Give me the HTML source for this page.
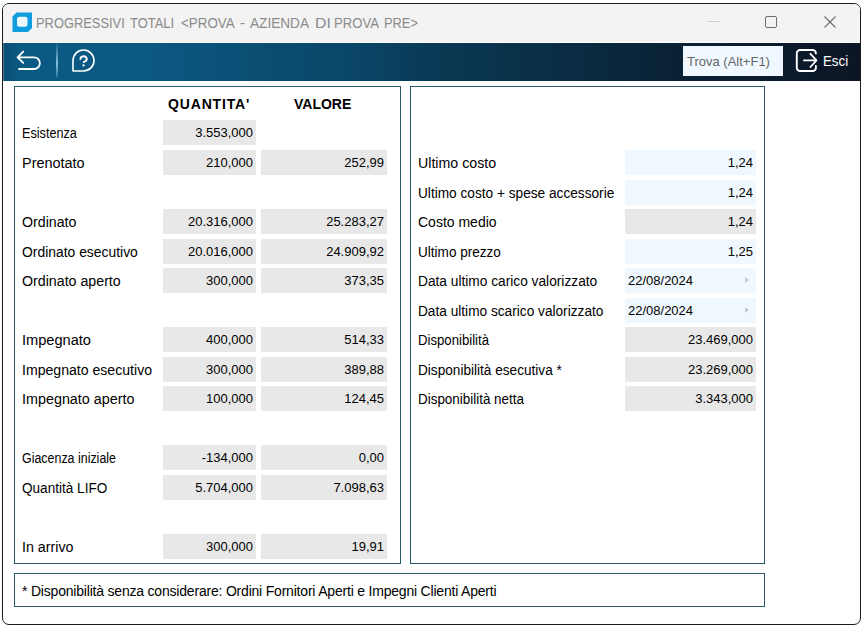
<!DOCTYPE html>
<html><head><meta charset="utf-8">
<style>
html,body{margin:0;padding:0;background:#fff;width:862px;height:627px;overflow:hidden;position:relative;font-family:"Liberation Sans",sans-serif;}
.win{position:absolute;left:2px;top:3px;width:857px;height:620px;border:1px solid #1c1c1c;border-radius:7px;background:#fff;overflow:hidden;}
.title{position:absolute;left:0;top:0;width:100%;height:38px;background:#f3f3f3;border-bottom:1px solid #fff;}
.toolbar{position:absolute;left:0;top:39px;width:100%;height:38px;background:linear-gradient(90deg,#0a4f75 0px,#0b5a83 17px,#0b5882 147px,#0b4f74 247px,#0a4668 347px,#0a3852 447px,#0a2e46 547px,#0a2438 647px,#0b1d2f 747px,#0c1524 857px);}
.abs{position:absolute;}
.tw{position:absolute;transform-origin:0 0;top:14.5px;font-size:14.5px;line-height:16px;color:#8a8a8a;white-space:nowrap;}
.panel{position:absolute;border:1px solid #2c586e;box-sizing:border-box;}
.lbl{position:absolute;transform-origin:0 0;height:25px;line-height:25px;font-size:14px;color:#000;white-space:nowrap;}
.box{position:absolute;height:25px;line-height:25px;font-size:13px;color:#000;box-sizing:border-box;white-space:nowrap;}
.g{background:#e8e8e8;}
.b{background:#f0f8ff;}
.num{text-align:right;padding-right:3px;}
.date{padding-left:3px;}
.tri{position:absolute;right:7px;top:9px;width:0;height:0;border-top:3.5px solid transparent;border-bottom:3.5px solid transparent;border-left:4px solid #c8c8c8;}
.hdr{position:absolute;top:94px;height:20px;line-height:20px;font-size:14px;font-weight:bold;white-space:nowrap;}
</style></head><body>
<div class="win">
  <div class="title">
    <svg class="abs" style="left:9px;top:8px" width="21" height="21" viewBox="0 0 21 21">
      <path d="M4.5 0.5 H20 V16 L16 20 H0.5 V4.5 Z" fill="#0f9ee0"/>
      <rect x="5" y="4.8" width="10.5" height="10" rx="2.5" fill="#eef9fd"/>
    </svg>
    <div class="abs" style="left:704px;top:17px;width:13px;height:1px;background:#d2d2d2"></div>
    <div class="abs" style="left:762px;top:12px;width:10px;height:10px;border:1px solid #6e6e6e;border-radius:2px"></div>
    <svg class="abs" style="left:821px;top:12px" width="12" height="12" viewBox="0 0 12 12"><path d="M0.5 0.5 L11.5 11.5 M11.5 0.5 L0.5 11.5" stroke="#6e6e6e" stroke-width="1.1"/></svg>
  </div>
  <div class="toolbar">
    <div class="abs" style="left:0;top:0;width:1px;height:38px;background:rgba(255,255,255,0.25)"></div>
    <svg class="abs" style="left:12px;top:5px" width="30" height="28" viewBox="0 0 30 28">
      <path d="M8.2 3.7 L2.6 9.3 L8.2 14.9 M2.6 9.3 H19 A5.85 5.85 0 0 1 19 21 H4.0" fill="none" stroke="#fff" stroke-width="1.85" stroke-linecap="round" stroke-linejoin="round"/>
    </svg>
    <div class="abs" style="left:52.5px;top:0;width:2px;height:34px;background:linear-gradient(180deg,rgba(120,180,210,0.1),rgba(150,210,240,0.85) 60%,rgba(120,180,210,0.35))"></div>
    <svg class="abs" style="left:68px;top:5px" width="26" height="26" viewBox="0 0 26 26">
      <path d="M2 23 V12.5 A10.5 10.5 0 1 1 12.5 23 Z" fill="none" stroke="#fff" stroke-width="1.6" stroke-linejoin="round"/>
      <path d="M9.4 11.0 A3.2 2.75 0 1 1 14.66 13.1 Q12.7 13.9 12.7 14.0" fill="none" stroke="#fff" stroke-width="1.9" stroke-linecap="round"/>
      <circle cx="12.5" cy="17.4" r="1.15" fill="#fff"/>
    </svg>
    <div class="abs" style="left:680px;top:3px;width:100px;height:30px;background:#f0f8ff;font-size:13px;color:#666;line-height:31px;padding-left:4px;box-sizing:border-box;white-space:nowrap">Trova (Alt+F1)</div>
    <svg class="abs" style="left:792px;top:6px" width="24" height="24" viewBox="0 0 24 24">
      <path d="M20.9 4.4 V4.3 A3.3 3.3 0 0 0 17.6 1 H5.1 A3.3 3.3 0 0 0 1.8 4.3 V18.7 A3.3 3.3 0 0 0 5.1 22 H17.6 A3.3 3.3 0 0 0 20.9 18.7 V16.9" fill="none" stroke="#fff" stroke-width="1.9" stroke-linecap="round"/>
      <path d="M8.9 11.4 H21.3 M15.4 4.8 L21.5 11.4 L15.4 18.0" fill="none" stroke="#fff" stroke-width="1.75" stroke-linecap="round" stroke-linejoin="round"/>
    </svg>
    <div class="abs" style="left:819.5px;top:7.5px;font-size:14px;transform:scaleX(0.95);transform-origin:0 0;color:#fff;line-height:20px;white-space:nowrap">Esci</div>
  </div>
</div>
<div class="panel" style="left:14px;top:86px;width:387px;height:478px"></div>
<div class="panel" style="left:410px;top:86px;width:355px;height:478px"></div>
<div class="panel" style="left:14px;top:573px;width:751px;height:34px"></div>
<div class="hdr" style="left:168px;letter-spacing:0.85px">QUANTITA'</div>
<div class="hdr" style="left:294px;letter-spacing:0px">VALORE</div>
<div class="tw" style="left:36.20px;transform:scaleX(0.8878)">PROGRESSIVI</div>
<div class="tw" style="left:130.40px;transform:scaleX(0.8940)">TOTALI</div>
<div class="tw" style="left:180.80px;transform:scaleX(0.9243)">&lt;PROVA</div>
<div class="tw" style="left:240.00px;transform:scaleX(1.0382)">-</div>
<div class="tw" style="left:250.00px;transform:scaleX(0.9392)">AZIENDA</div>
<div class="tw" style="left:315.00px;transform:scaleX(1.0952)">DI</div>
<div class="tw" style="left:333.80px;transform:scaleX(0.9041)">PROVA</div>
<div class="tw" style="left:384.00px;transform:scaleX(0.8867)">PRE&gt;</div>
<div class="lbl" style="left:22px;top:121px;transform:scaleX(0.9042)">Esistenza</div>
<div class="box g num" style="left:163px;top:120px;width:93px">3.553,000</div>
<div class="lbl" style="left:22px;top:151px;transform:scaleX(1.0308)">Prenotato</div>
<div class="box g num" style="left:163px;top:150px;width:93px">210,000</div>
<div class="box g num" style="left:261px;top:150px;width:126px">252,99</div>
<div class="lbl" style="left:22px;top:210px;transform:scaleX(1.0136)">Ordinato</div>
<div class="box g num" style="left:163px;top:209px;width:93px">20.316,000</div>
<div class="box g num" style="left:261px;top:209px;width:126px">25.283,27</div>
<div class="lbl" style="left:22px;top:240px;transform:scaleX(0.9922)">Ordinato esecutivo</div>
<div class="box g num" style="left:163px;top:239px;width:93px">20.016,000</div>
<div class="box g num" style="left:261px;top:239px;width:126px">24.909,92</div>
<div class="lbl" style="left:22px;top:269px;transform:scaleX(1.0147)">Ordinato aperto</div>
<div class="box g num" style="left:163px;top:268px;width:93px">300,000</div>
<div class="box g num" style="left:261px;top:268px;width:126px">373,35</div>
<div class="lbl" style="left:22px;top:328px;transform:scaleX(1.0428)">Impegnato</div>
<div class="box g num" style="left:163px;top:327px;width:93px">400,000</div>
<div class="box g num" style="left:261px;top:327px;width:126px">514,33</div>
<div class="lbl" style="left:22px;top:358px;transform:scaleX(1.0063)">Impegnato esecutivo</div>
<div class="box g num" style="left:163px;top:357px;width:93px">300,000</div>
<div class="box g num" style="left:261px;top:357px;width:126px">389,88</div>
<div class="lbl" style="left:22px;top:387px;transform:scaleX(1.0251)">Impegnato aperto</div>
<div class="box g num" style="left:163px;top:386px;width:93px">100,000</div>
<div class="box g num" style="left:261px;top:386px;width:126px">124,45</div>
<div class="lbl" style="left:22px;top:446px;transform:scaleX(0.8879)">Giacenza iniziale</div>
<div class="box g num" style="left:163px;top:445px;width:93px">-134,000</div>
<div class="box g num" style="left:261px;top:445px;width:126px">0,00</div>
<div class="lbl" style="left:22px;top:476px;transform:scaleX(0.9696)">Quantit&agrave; LIFO</div>
<div class="box g num" style="left:163px;top:475px;width:93px">5.704,000</div>
<div class="box g num" style="left:261px;top:475px;width:126px">7.098,63</div>
<div class="lbl" style="left:22px;top:535px;transform:scaleX(1.0187)">In arrivo</div>
<div class="box g num" style="left:163px;top:534px;width:93px">300,000</div>
<div class="box g num" style="left:261px;top:534px;width:126px">19,91</div>
<div class="lbl" style="left:418px;top:151px;transform:scaleX(1.0136)">Ultimo costo</div>
<div class="box b num" style="left:625px;top:150px;width:131px">1,24</div>
<div class="lbl" style="left:418px;top:181px;transform:scaleX(0.9758)">Ultimo costo + spese accessorie</div>
<div class="box b num" style="left:625px;top:180px;width:131px">1,24</div>
<div class="lbl" style="left:418px;top:210px;transform:scaleX(1.0000)">Costo medio</div>
<div class="box g num" style="left:625px;top:209px;width:131px">1,24</div>
<div class="lbl" style="left:418px;top:240px;transform:scaleX(0.9689)">Ultimo prezzo</div>
<div class="box b num" style="left:625px;top:239px;width:131px">1,25</div>
<div class="lbl" style="left:418px;top:269px;transform:scaleX(0.9801)">Data ultimo carico valorizzato</div>
<div class="box b date" style="left:625px;top:268px;width:131px">22/08/2024<span class="tri"></span></div>
<div class="lbl" style="left:418px;top:299px;transform:scaleX(0.9765)">Data ultimo scarico valorizzato</div>
<div class="box b date" style="left:625px;top:298px;width:131px">22/08/2024<span class="tri"></span></div>
<div class="lbl" style="left:418px;top:328px;transform:scaleX(0.9410)">Disponibilit&agrave;</div>
<div class="box g num" style="left:625px;top:327px;width:131px">23.469,000</div>
<div class="lbl" style="left:418px;top:358px;transform:scaleX(0.9725)">Disponibilit&agrave; esecutiva *</div>
<div class="box g num" style="left:625px;top:357px;width:131px">23.269,000</div>
<div class="lbl" style="left:418px;top:387px;transform:scaleX(0.9589)">Disponibilit&agrave; netta</div>
<div class="box g num" style="left:625px;top:386px;width:131px">3.343,000</div>
<div class="lbl" style="left:22px;top:579px;font-size:14px;letter-spacing:-0.2px">* Disponibilit&agrave; senza considerare: Ordini Fornitori Aperti e Impegni Clienti Aperti</div>
</body></html>
